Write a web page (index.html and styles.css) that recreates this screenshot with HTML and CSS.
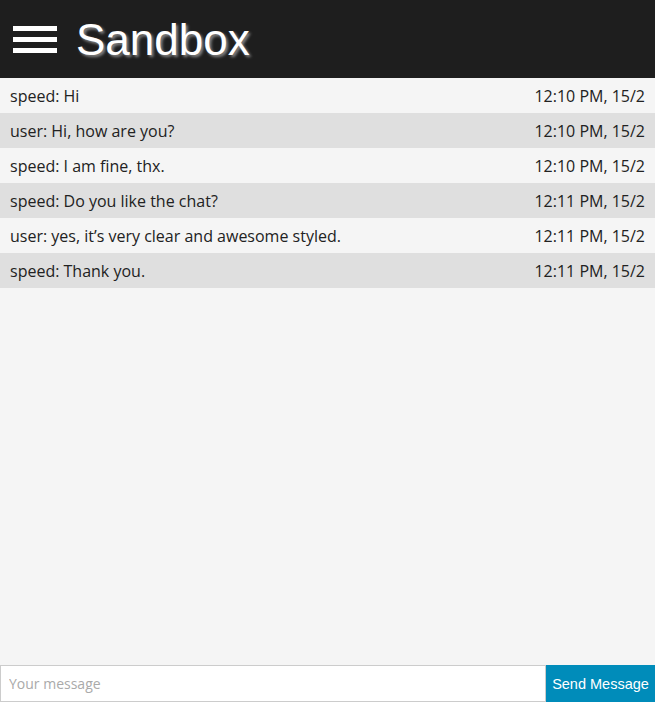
FILE: index.html
```html
<!DOCTYPE html>
<html>
<head>
<meta charset="utf-8">
<link rel="stylesheet" href="styles.css">
</head>
<body>
<div class="app">
  <header class="topbar">
    <div class="burger"><span></span><span></span><span></span></div>
    <h1 class="title">Sandbox</h1>
  </header>
  <main class="messages">
    <div class="msg"><span>speed: Hi</span><span>12:10 PM, 15/2</span></div>
    <div class="msg"><span>user: Hi, how are you?</span><span>12:10 PM, 15/2</span></div>
    <div class="msg"><span>speed: I am fine, thx.</span><span>12:10 PM, 15/2</span></div>
    <div class="msg"><span>speed: Do you like the chat?</span><span>12:11 PM, 15/2</span></div>
    <div class="msg"><span>user: yes, it’s very clear and awesome styled.</span><span>12:11 PM, 15/2</span></div>
    <div class="msg"><span>speed: Thank you.</span><span>12:11 PM, 15/2</span></div>
  </main>
  <form class="composer">
    <input class="input" type="text" placeholder="Your message">
    <button class="send" type="button">Send Message</button>
  </form>
</div>
</body>
</html>
```
FILE: styles.css
```css
html, body { margin: 0; padding: 0; height: 100%; }
body { background: #f5f5f5; font-family: "Open Sans", sans-serif; color: #222; }
.app { display: flex; flex-direction: column; height: 702px; }
.topbar { height: 78px; background: #1e1e1e; display: flex; align-items: center; box-sizing: border-box; padding-left: 13px; }
.burger { display: flex; flex-direction: column; gap: 6px; width: 44px; margin-top: 0; }
.burger span { display: block; height: 5px; background: #fff; }
.title { margin: 0 0 0 19px; font-family: "Liberation Sans", Arial, sans-serif; font-weight: normal; font-size: 44px; color: #fff; text-shadow: 2px 2px 3px #8a8a8a; line-height: 1; position: relative; top: 1px; }
.messages { flex: 1; }
.msg { height: 35px; display: flex; justify-content: space-between; align-items: center; padding: 0 10px; font-size: 16px; color: #222; }
.msg:nth-child(odd) { background: #f5f5f5; }
.msg:nth-child(even) { background: #dfdfdf; }
.composer { display: flex; height: 37px; margin: 0; }
.input { flex: 1; box-sizing: border-box; height: 37px; margin: 0; border: 1px solid #ccc; background: #fff; padding: 0 8px; font-family: "Open Sans", sans-serif; font-size: 14px; color: #222; outline: none; }
.input::placeholder { color: #aaa; }
.send { width: 109px; height: 37px; border: 0; margin: 0; background: #008cba; color: #fff; font-family: "Liberation Sans", Arial, sans-serif; font-size: 14.5px; padding: 0; }
```
